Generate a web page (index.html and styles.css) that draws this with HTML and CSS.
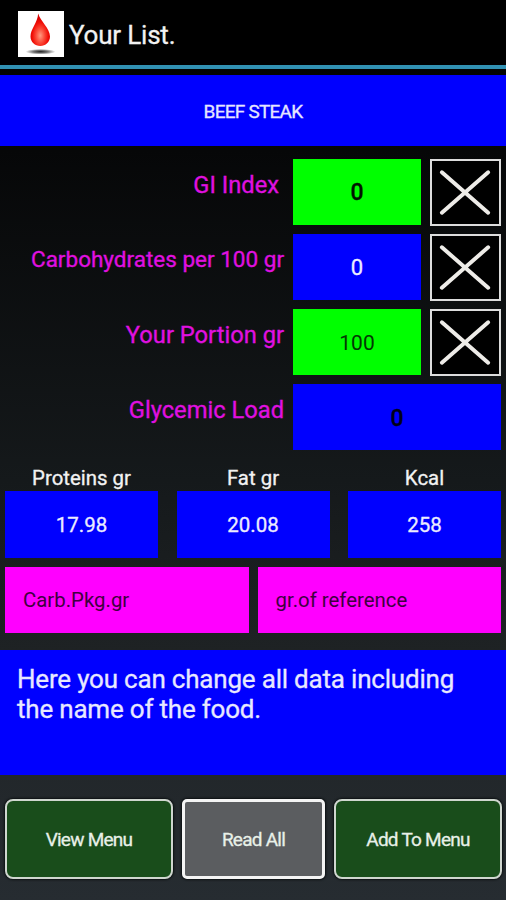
FILE: index.html
```html
<!DOCTYPE html>
<html lang="en">
<head>
  <meta charset="UTF-8">
  <meta name="viewport" content="width=device-width, initial-scale=1.0">
  <title>Your List.</title>
  <link rel="stylesheet" href="styles.css">
</head>
<body>
  <header class="topbar">
    <svg class="logo" viewBox="0 0 46 46" aria-hidden="true">
      <defs>
        <radialGradient id="drop" cx="50%" cy="68%" r="55%">
          <stop offset="0" stop-color="#ff9a80"/>
          <stop offset="0.4" stop-color="#fb4a38"/>
          <stop offset="0.75" stop-color="#f00e06"/>
          <stop offset="1" stop-color="#d80000"/>
        </radialGradient>
        <radialGradient id="shadow">
          <stop offset="0" stop-color="#222"/>
          <stop offset="0.5" stop-color="#777"/>
          <stop offset="1" stop-color="#fff"/>
        </radialGradient>
      </defs>
      <rect width="46" height="46" fill="#fff"/>
      <ellipse cx="22.5" cy="40.7" rx="15" ry="2.8" fill="url(#shadow)"/>
      <path d="M20.2 2.5C22 10 32 17 32 25.5C32 31 27.5 35 22.3 35C17 35 12.5 31 12.5 25.5C12.5 18 19.5 12 20.2 2.5Z" fill="url(#drop)"/>
    </svg>
    <h1>Your List.</h1>
  </header>

  <main>
    <div class="food-name">BEEF STEAK</div>

    <section class="values">
      <label class="label-short">GI Index</label>
      <div class="field green bold">0</div>
      <button class="clear" aria-label="Clear"><svg viewBox="0 0 68 63"><path d="M10 11L57 52M57 11L10 52"/></svg></button>

      <label class="label-long">Carbohydrates per 100 gr</label>
      <div class="field blue">0</div>
      <button class="clear" aria-label="Clear"><svg viewBox="0 0 68 63"><path d="M10 11L57 52M57 11L10 52"/></svg></button>

      <label>Your Portion gr</label>
      <div class="field green portion">100</div>
      <button class="clear" aria-label="Clear"><svg viewBox="0 0 68 63"><path d="M10 11L57 52M57 11L10 52"/></svg></button>

      <label>Glycemic Load</label>
      <div class="field load bold">0</div>
    </section>

    <section class="nutrients">
      <div class="nutrient"><span>Proteins gr</span><div class="field blue">17.98</div></div>
      <div class="nutrient"><span>Fat gr</span><div class="field blue">20.08</div></div>
      <div class="nutrient"><span>Kcal</span><div class="field blue">258</div></div>
    </section>

    <section class="package">
      <div class="hint">Carb.Pkg.gr</div>
      <div class="hint">gr.of reference</div>
    </section>

    <p class="help">Here you can change all data including<br>the name of the food.</p>
  </main>

  <footer class="actions">
    <button class="btn">View Menu</button>
    <button class="btn btn-gray">Read All</button>
    <button class="btn">Add To Menu</button>
  </footer>
</body>
</html>
```
FILE: styles.css
```css
*, *::before, *::after {
  box-sizing: border-box;
}
body {
  margin: 0;
  width: 506px;
  height: 900px;
  overflow: hidden;
  font-family: Roboto, sans-serif;
  color: #f2f2f2;
  background: linear-gradient(#000 0, #060708 150px, #15191b 480px, #1e2224 650px, #262c31 900px);
  -webkit-text-stroke: 0.3px;
}

/* Title bar */
.topbar {
  display: flex;
  align-items: center;
  height: 69px;
  padding: 2px 0 0 18px;
  background: #000;
  border-bottom: 4px solid #3191b3;
}
.logo {
  width: 46px;
  height: 46px;
}
h1 {
  margin: 3px 0 0 5px;
  font-size: 26px;
  font-weight: 400;
  line-height: 30px;
  letter-spacing: -0.2px;
}

.food-name {
  display: flex;
  align-items: center;
  justify-content: center;
  height: 71px;
  margin-top: 6px;
  padding-top: 1px;
  background: #00f;
  color: #e6e6ff;
  font-size: 19px;
  letter-spacing: -0.75px;
}

/* Editable values */
.values {
  display: grid;
  grid-template-columns: 284px 128px 71px;
  grid-auto-rows: 66px;
  gap: 9px;
  margin-top: 13px;
}
.values label {
  padding-top: 12px;
  text-align: right;
  color: #e010e0;
  font-size: 23.7px;
  line-height: 28px;
  white-space: nowrap;
}
.values .label-short {
  padding-right: 5px;
}
.values .label-long {
  padding-top: 11px;
  font-size: 22.5px;
}
.field {
  display: flex;
  align-items: center;
  justify-content: center;
  height: 66px;
  padding-top: 1px;
  font-size: 22px;
}
.green {
  background: #0f0;
  color: #043804;
}
.blue {
  background: #00f;
  color: #ececff;
}
.portion {
  font-size: 21px;
  -webkit-text-stroke: 0;
}
.bold {
  font-size: 23px;
  font-weight: 500;
  color: #001400;
}
.load {
  grid-column: span 2;
  padding-top: 3px;
  background: #00f;
  color: #000018;
}
.clear {
  height: 67px;
  padding: 0;
  background: #000;
  border: 2px solid #ddd;
}
.clear svg {
  display: block;
  width: 100%;
  height: 100%;
}
.clear path {
  fill: none;
  stroke: #eeece8;
  stroke-width: 4;
  stroke-linecap: round;
}

.nutrients {
  display: grid;
  grid-template-columns: repeat(3, 153px);
  justify-content: space-between;
  padding: 0 5px;
  margin-top: 16px;
}
.nutrient span {
  display: block;
  height: 25px;
  text-align: center;
  font-size: 20.4px;
  line-height: 25px;
}
.nutrient .field {
  height: 67px;
  font-size: 20.5px;
}

.package {
  display: grid;
  grid-template-columns: 1fr 1fr;
  gap: 9px;
  padding: 0 5px;
  margin-top: 9px;
}
.hint {
  display: flex;
  align-items: center;
  height: 66px;
  padding-left: 18px;
  background: #f0f;
  color: #400040;
  font-size: 20.4px;
  -webkit-text-stroke: 0;
}

.help {
  height: 125px;
  margin: 17px 0 0;
  padding: 14px 17px;
  background: #00f;
  color: #e8e8ff;
  font-size: 26px;
  line-height: 30px;
  letter-spacing: -0.2px;
  white-space: nowrap;
}

/* Bottom buttons */
.actions {
  display: grid;
  grid-template-columns: 168px 143px 168px;
  justify-content: space-between;
  padding: 0 4px 0 5px;
  margin-top: 24px;
}
.btn {
  height: 80px;
  padding: 1px 0 0;
  font-family: inherit;
  font-size: 19px;
  letter-spacing: -0.75px;
  color: #e8f0e8;
  background: #194d1b;
  border: 2px solid #cfd6cf;
  border-radius: 8px;
  box-shadow: 0 0 2px 1px #0c1012;
}
.btn-gray {
  background: #5b5d60;
  border: 3px solid #f4f4f4;
  border-radius: 5px;
}
```
